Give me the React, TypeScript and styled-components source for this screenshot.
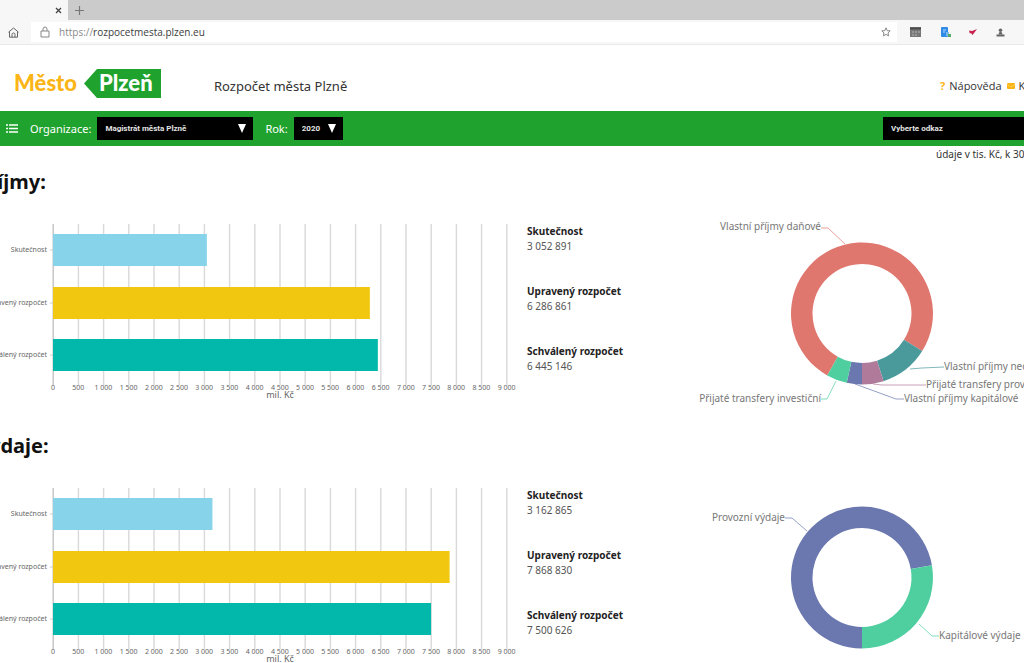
import React from "react";
import styled, { createGlobalStyle } from "styled-components";

const Global = createGlobalStyle`
  *, *::before, *::after { box-sizing: border-box; }
  body {
    margin: 0;
    background: #fff;
    color: #333;
    font-family: "Noto Sans", "Open Sans", sans-serif;
  }
`;

const Page = styled.div`
  overflow-x: clip;
`;

/* Browser window */
const TabStrip = styled.div`
  display: flex;
  height: 20px;
  background: #cbcbcb;
`;

const Tab = styled.div`
  display: flex;
  align-items: center;
  justify-content: flex-end;
  width: 68px;
  padding-right: 6px;
  background: #f7f7f7;
`;

const IconButton = styled.button`
  display: flex;
  align-items: center;
  justify-content: center;
  flex: none;
  padding: 0;
  border: 0;
  background: none;
  color: #555;
`;

const NewTab = styled(IconButton)`
  width: 22px;
`;

const Toolbar = styled.div`
  display: flex;
  align-items: center;
  height: 25px;
  background: #f7f7f7;
  border-bottom: 1px solid #e9e9e9;
`;

const HomeButton = styled(IconButton)`
  width: 31px;
  padding-right: 5px;
`;

const AddressBar = styled.div`
  display: flex;
  align-items: center;
  flex: 1;
  height: 20px;
  padding: 0 6px 0 9px;
  gap: 9px;
  background: #fff;
`;

const Url = styled.div`
  flex: 1;
  font-family: "Open Sans", sans-serif;
  font-size: 10px;
  color: #3c3c3c;
`;

const Scheme = styled.span`
  color: #8a8a8a;
`;

const Extensions = styled.div`
  display: flex;
  align-items: center;
  justify-content: space-between;
  width: 127px;
  padding: 0 19px 0 13px;
`;

/* Site header */
const Header = styled.header`
  display: flex;
  align-items: center;
  height: 66px;
  padding: 15px 0 0 14px;
`;

const Logo = styled.a`
  display: flex;
  align-items: center;
  width: 200px;
  margin-top: -4px;
  text-decoration: none;
`;

const LogoSvg = styled.svg`
  display: block;
  font-family: Lato, sans-serif;
  font-weight: 900;
`;

const SiteTitle = styled.h1`
  flex: 1;
  margin: 0;
  font-size: 13px;
  font-weight: 400;
  line-height: 20px;
`;

const HelpLinks = styled.nav`
  display: flex;
  align-items: center;
  gap: 5px;
  width: 84px;
  white-space: nowrap;
`;

const HelpLink = styled.a`
  display: flex;
  align-items: center;
  gap: 4px;
  font-family: "Open Sans", sans-serif;
  font-size: 11px;
  line-height: 20px;
  color: #333;
  text-decoration: none;
`;

const Question = styled.span`
  color: #fbb516;
  font-weight: 700;
`;

/* Filter bar */
const FilterBar = styled.div`
  display: flex;
  align-items: center;
  height: 35px;
  padding-left: 6px;
  background: #20a32e;
  color: #fff;
`;

const MenuButton = styled(IconButton)`
  width: 12px;
  margin-right: 12px;
  color: #fff;
`;

const FilterLabel = styled.label`
  margin-right: 6px;
  font-size: 11px;
  line-height: 20px;
`;

const SelectBox = styled.div<{ $width: number }>`
  display: flex;
  align-items: center;
  flex: none;
  width: ${(p) => p.$width}px;
  height: 23px;
  margin-right: 12px;
  padding: 0 7px 0 8px;
  background: #000;
`;

const LinkSelectBox = styled(SelectBox)`
  margin: 0 0 0 auto;
`;

const Select = styled.select`
  flex: 1;
  min-width: 0;
  height: 23px;
  padding: 0;
  border: 0;
  appearance: none;
  background: none;
  color: #e4e4e4;
  font-family: Roboto, sans-serif;
  font-size: 8px;
  font-weight: 700;
`;

const Note = styled.p`
  width: 88px;
  margin: 0 0 6px auto;
  font-size: 10px;
  line-height: 16px;
  white-space: nowrap;
`;

/* Budget sections */
const Main = styled.main`
  display: flex;
  flex-direction: column;
  gap: 33px;
`;

const SectionTitle = styled.h2`
  margin: 0 0 20px -24px;
  font-size: 20px;
  font-weight: 700;
  line-height: 28px;
  color: #111;
`;

const Columns = styled.div`
  display: grid;
  grid-template-columns: minmax(0, 527fr) minmax(0, 155fr) minmax(0, 342fr);
`;

const Chart = styled.svg`
  display: block;
  width: 100%;
  overflow: visible;
`;

const AxisText = styled.text`
  font-size: 7px;
  fill: #666;
`;

const UnitText = styled.text`
  font-size: 9px;
  fill: #666;
`;

const SliceText = styled.text`
  font-size: 10px;
  fill: #777;
`;

const Stats = styled.dl`
  display: flex;
  flex-direction: column;
  gap: 30px;
  margin: 0;
  padding-top: 8px;
  font-size: 10px;
  line-height: 15px;
`;

const StatName = styled.dt`
  font-weight: 700;
  color: #222;
`;

const StatValue = styled.dd`
  margin: 0;
  color: #555;
`;

const formatNumber = (n: number) =>
  String(n).replace(/\B(?=(\d{3})+$)/g, " ");

const AXIS_X = 53;
const STEP = 25.2;
const BAR_COLORS = ["#87d3ea", "#f1c80f", "#02b8ab"];
const BAR_TOPS = [18, 71, 123];
const NAMES = ["Skutečnost", "Upravený rozpočet", "Schválený rozpočet"];

function BarChart({ values, title }: { values: number[]; title: string }) {
  const ticks = Array.from({ length: 19 }, (_, i) => i);
  return (
    <Chart viewBox="0 0 527 183" role="img" aria-label={title}>
      {ticks.map((i) => (
        <rect
          key={i}
          x={AXIS_X + i * STEP - 0.5}
          y={8}
          width={1.4}
          height={161}
          fill={i === 0 ? "#c4c4c4" : "#d9d9d9"}
        />
      ))}
      {values.map((v, i) => (
        <g key={NAMES[i]}>
          <rect x={50} y={BAR_TOPS[i] + 15.5} width={3} height={1} fill="#ccc" />
          <rect
            x={AXIS_X}
            y={BAR_TOPS[i]}
            width={(v / 500000) * STEP}
            height={32}
            fill={BAR_COLORS[i]}
          />
          <AxisText x={47} y={BAR_TOPS[i] + 18} textAnchor="end">
            {NAMES[i]}
          </AxisText>
        </g>
      ))}
      {ticks.map((i) => (
        <AxisText key={i} x={AXIS_X + i * STEP} y={174} textAnchor="middle">
          {formatNumber(i * 500)}
        </AxisText>
      ))}
      <UnitText x={280} y={182} textAnchor="middle">
        mil. Kč
      </UnitText>
    </Chart>
  );
}

type Slice = {
  label: string;
  from: number;
  to: number;
  color: string;
  line: string;
  x: number;
  y: number;
  end?: boolean;
};

const CX = 180;
const CY = 97.5;

function ring(from: number, to: number) {
  const at = (deg: number, r: number) => {
    const a = (deg * Math.PI) / 180;
    return `${(CX + r * Math.sin(a)).toFixed(2)} ${(CY - r * Math.cos(a)).toFixed(2)}`;
  };
  const large = to - from > 180 ? 1 : 0;
  return `M${at(from, 71)}A71 71 0 ${large} 1 ${at(to, 71)}L${at(to, 49.5)}A49.5 49.5 0 ${large} 0 ${at(from, 49.5)}Z`;
}

function Donut({ slices, title }: { slices: Slice[]; title: string }) {
  return (
    <Chart viewBox="0 0 342 183" role="img" aria-label={title}>
      {slices.map((s) => (
        <g key={s.label}>
          <path d={ring(s.from, s.to)} fill={s.color} />
          <polyline points={s.line} fill="none" stroke={s.color} strokeOpacity={0.7} />
          <SliceText x={s.x} y={s.y} textAnchor={s.end ? "end" : "start"}>
            {s.label}
          </SliceText>
        </g>
      ))}
    </Chart>
  );
}

const INCOME: Slice[] = [
  { label: "Vlastní příjmy daňové", from: 209.3, to: 482, color: "#e0776f", line: "139,12 146,12 163,28", x: 139, y: 14, end: true },
  { label: "Vlastní příjmy nedaňové", from: 122, to: 162.3, color: "#4a9a9c", line: "228,153 240,152 262,151", x: 262, y: 154 },
  { label: "Přijaté transfery provozní", from: 162.3, to: 180, color: "#b07a9a", line: "191,168 200,169 244,169", x: 244, y: 172 },
  { label: "Vlastní příjmy kapitálové", from: 180, to: 192.4, color: "#6a78af", line: "173,168 214,183 222,183", x: 222, y: 186 },
  { label: "Přijaté transfery investiční", from: 192.4, to: 209.3, color: "#4fcf9f", line: "139,183 145,183 154,165", x: 139, y: 186, end: true },
];

const EXPENSES: Slice[] = [
  { label: "Provozní výdaje", from: 180, to: 440, color: "#6a78af", line: "103,38 110,38 125,51", x: 103, y: 41, end: true },
  { label: "Kapitálové výdaje", from: 80, to: 180, color: "#4fcf9f", line: "237,144 250,156 257,156", x: 257, y: 159 },
];

function Section({ title, values, slices }: { title: string; values: number[]; slices: Slice[] }) {
  return (
    <section>
      <SectionTitle>{title}</SectionTitle>
      <Columns>
        <BarChart values={values} title={title} />
        <Stats>
          {NAMES.map((name, i) => (
            <div key={name}>
              <StatName>{name}</StatName>
              <StatValue>{formatNumber(values[i])}</StatValue>
            </div>
          ))}
        </Stats>
        <Donut slices={slices} title={title} />
      </Columns>
    </section>
  );
}

const Arrow = () => (
  <svg width="8" height="9" viewBox="0 0 8 9" aria-hidden="true">
    <path d="M0 0h8L4 9z" fill="#fff" />
  </svg>
);

export default function App() {
  return (
    <Page>
      <Global />
      <TabStrip>
        <Tab>
          <IconButton aria-label="Zavřít kartu">
            <svg width="7" height="7" viewBox="0 0 7 7" stroke="#444" strokeWidth="1.3">
              <path d="M1 1l5 5M6 1L1 6" />
            </svg>
          </IconButton>
        </Tab>
        <NewTab aria-label="Nová karta">
          <svg width="9" height="9" viewBox="0 0 9 9" stroke="#777" strokeWidth="1.2">
            <path d="M4.5 0v9M0 4.5h9" />
          </svg>
        </NewTab>
      </TabStrip>
      <Toolbar>
        <HomeButton aria-label="Domů">
          <svg width="11" height="11" viewBox="0 0 11 11" fill="none" stroke="#666">
            <path d="M.5 5.200L5.500 1l5 4.200M1.500 4.600V10.200h8V4.600" />
            <path d="M4 10V7.500a1.500 1.500 0 0 1 3 0V10" />
          </svg>
        </HomeButton>
        <AddressBar>
          <svg width="10" height="12" viewBox="0 0 10 12" fill="none" stroke="#888" aria-hidden="true">
            <path d="M1 5h8v6H1zM3 5V3a2 2 0 0 1 4 0v2" />
          </svg>
          <Url>
            <Scheme>https://</Scheme>rozpocetmesta.plzen.eu
          </Url>
          <IconButton aria-label="Přidat k oblíbeným">
            <svg width="10" height="10" viewBox="0 0 10 10" fill="none" stroke="#888">
              <path d="M5 .8l1.200 2.800 3 .3-2.200 2 .6 3L5 7.400 2.400 8.900l.6-3-2.200-2 3-.3z" />
            </svg>
          </IconButton>
        </AddressBar>
        <Extensions>
          <IconButton aria-label="Kalendář">
            <svg width="11" height="10" viewBox="0 0 11 10">
              <path d="M0 0h11v10H0z" fill="#777" />
              <path d="M0 1.500h11" stroke="#4c4c4c" strokeWidth="2" />
              <path d="M2 5h2M5 5h2M8 5h2M2 8h2M5 8h2" stroke="#b5b5b5" />
            </svg>
          </IconButton>
          <IconButton aria-label="Překladač">
            <svg width="11" height="11" viewBox="0 0 11 11">
              <rect x="1" width="7" height="10" rx="1" fill="#2f8be6" />
              <path d="M3 3h3M3 5h2" stroke="#b9dcff" />
              <path d="M6 5h3v4H6z" fill="#7db6e8" />
              <path d="M8 7h3v3H8z" fill="#55a868" />
            </svg>
          </IconButton>
          <IconButton aria-label="Rozšíření">
            <svg width="8" height="7" viewBox="0 0 8 7">
              <path d="M0 1.500l3 .6L8 0 5.500 3.500 3.500 6 2.400 4.500 .6 4z" fill="#c8224f" />
            </svg>
          </IconButton>
          <IconButton aria-label="Profil">
            <svg width="9" height="9" viewBox="0 0 9 9" fill="#666">
              <circle cx="4.500" cy="2.200" r="1.800" />
              <path d="M3.500 4h2l1.200 2.500H2.300z" />
              <path d="M.5 6.500h8v2h-8z" />
            </svg>
          </IconButton>
        </Extensions>
      </Toolbar>

      <Header>
        <Logo href="#" aria-label="Město Plzeň">
          <LogoSvg width="148" height="29" viewBox="0 0 148 29">
            <path d="M70 14.500L83 0h64v29H83z" fill="#20a32e" />
            <text x="0" y="22" fontSize="22" fill="#fbb516">Město</text>
            <text x="85" y="22" fontSize="22" fill="#fff">Plzeň</text>
          </LogoSvg>
        </Logo>
        <SiteTitle>Rozpočet města Plzně</SiteTitle>
        <HelpLinks>
          <HelpLink href="#">
            <Question>?</Question>Nápověda
          </HelpLink>
          <HelpLink href="#">
            <svg width="8" height="6" viewBox="0 0 8 6" aria-hidden="true">
              <rect width="8" height="6" rx="1" fill="#fbb516" />
              <path d="M0 1.500l4 2.500 4-2.500" fill="none" stroke="#ffd777" strokeWidth=".7" />
            </svg>
            Kontakt
          </HelpLink>
        </HelpLinks>
      </Header>

      <FilterBar>
        <MenuButton aria-label="Nabídka">
          <svg width="12" height="10" viewBox="0 0 12 10" stroke="#fff" strokeWidth="1.500">
            <path d="M0 1h2M3 1h9M0 4.500h2M3 4.500h9M0 8h2M3 8h9" />
          </svg>
        </MenuButton>
        <FilterLabel htmlFor="organization">Organizace:</FilterLabel>
        <SelectBox $width={156}>
          <Select id="organization">
            <option>Magistrát města Plzně</option>
          </Select>
          <Arrow />
        </SelectBox>
        <FilterLabel htmlFor="year">Rok:</FilterLabel>
        <SelectBox $width={49}>
          <Select id="year">
            <option>2020</option>
          </Select>
          <Arrow />
        </SelectBox>
        <LinkSelectBox $width={141}>
          <Select aria-label="Odkaz">
            <option>Vyberte odkaz</option>
          </Select>
        </LinkSelectBox>
      </FilterBar>
      <Note>údaje v tis. Kč, k 30. 6. 2020</Note>

      <Main>
        <Section title="Příjmy:" values={[3052891, 6286861, 6445146]} slices={INCOME} />
        <Section title="Výdaje:" values={[3162865, 7868830, 7500626]} slices={EXPENSES} />
      </Main>
    </Page>
  );
}
